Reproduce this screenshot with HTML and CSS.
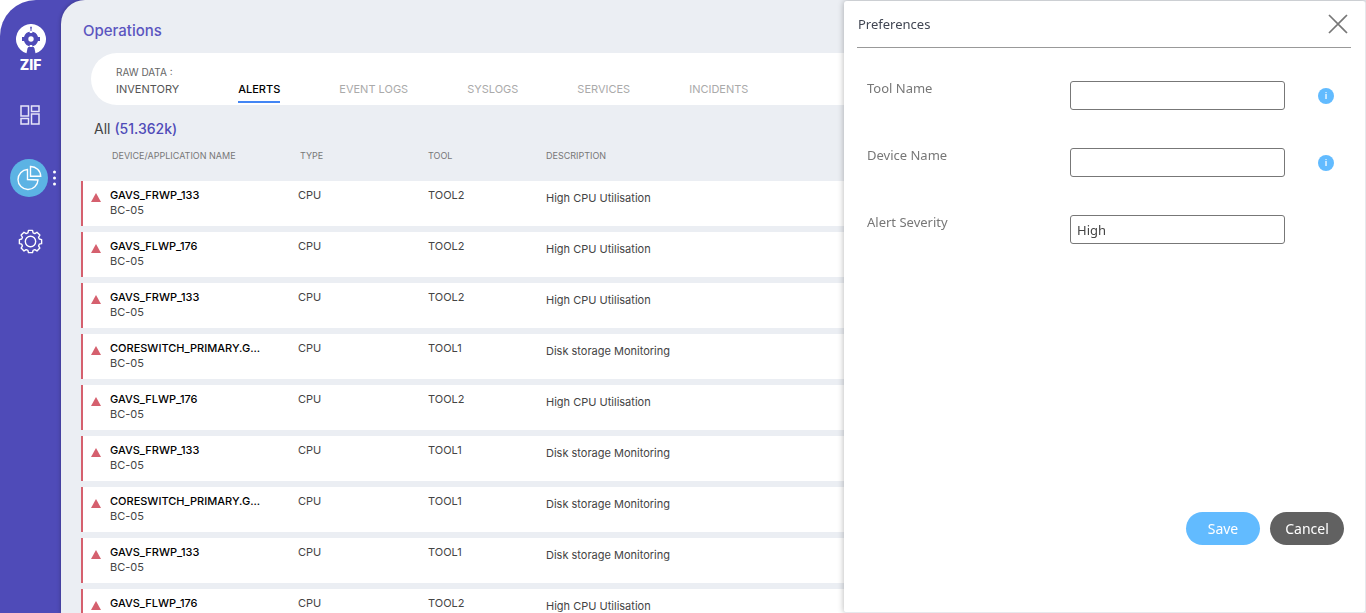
FILE: index.html
```html
<!DOCTYPE html>
<html lang="en">
<head>
<meta charset="utf-8">
<title>Operations</title>
<link rel="stylesheet" href="styles.css">
</head>
<body>
<div class="app">
  <nav class="sidebar" aria-label="Main">
    <a class="brand" href="#">
      <svg width="30" height="30" viewBox="0 0 30 30" aria-hidden="true">
        <path fill="#fff" d="M10.500 29.300A15 15 0 1 1 19.500 29.300L18.800 26A3.800 3.800 0 0 0 11.200 26Z"/>
        <path fill="#4f4bb8" d="M15 7.400a7.300 7.300 0 0 1 7 5.600h2v4h-2a7.300 7.300 0 0 1-14 0H6v-4h2a7.300 7.300 0 0 1 7-5.600z"/>
        <circle cx="15" cy="15" r="2.700" fill="#fff"/>
        <path fill="#4f4bb8" d="M14.200 2.800h1.600v1.800h-1.600zM14.500 4.600h1v3h-1z"/>
        <path fill="#fff" d="M13.700 7h2.600v2h-2.600zM13.700 21h2.600v2h-2.600z"/>
      </svg>
      <span class="brand-name">ZIF</span>
    </a>
    <a class="nav-link" href="#" aria-label="Dashboard">
      <svg width="20" height="20" viewBox="0 0 20 20" fill="none" stroke="#e6e5f7" stroke-width="1.500" aria-hidden="true">
        <path d="M1 1h7.500v10H1zM11.500 1H19v5.500h-7.500zM1 13.500h7.500V19H1zM11.500 9H19v10h-7.500z"/>
      </svg>
    </a>
    <a class="nav-link active" href="#" aria-label="Operations" aria-current="page">
      <svg width="26" height="26" viewBox="0 0 26 26" fill="none" stroke="#fff" stroke-width="1.400" aria-hidden="true">
        <path d="M11.500 4.500a10 10 0 1 0 10.500 10.500l-10.500-.5z"/>
        <path d="M14.500 1.500v9.800h10.200a10 10 0 0 0-10.200-9.800z"/>
      </svg>
      <svg class="dots" width="3" height="16" viewBox="0 0 3 16" fill="#fff" aria-hidden="true">
        <circle cx="1.500" cy="2" r="1.500"/><circle cx="1.500" cy="8" r="1.500"/><circle cx="1.500" cy="14" r="1.500"/>
      </svg>
    </a>
    <a class="nav-link" href="#" aria-label="Settings">
      <svg width="25" height="25" viewBox="0 0 26 27" fill="none" stroke="#fff" stroke-width="1.500" stroke-linejoin="round" aria-hidden="true">
        <path d="M10.800 1.500h4.400l.6 2.600 1.900.8 2.300-1.400 3.100 3.100-1.400 2.300.8 1.900 2.500.6v4.400l-2.500.6-.8 1.900 1.400 2.300-3.100 3.100-2.300-1.400-1.900.8-.6 2.400h-4.400l-.6-2.400-1.900-.8L6 23.700l-3.100-3.100 1.400-2.300-.8-1.900-2.500-.6v-4.400l2.500-.6.8-1.900-1.400-2.300L6 3.500l2.300 1.400 1.900-.8z"/>
        <circle cx="13" cy="13.500" r="5.600"/>
      </svg>
    </a>
  </nav>

  <main class="content">
    <h1 class="page-title">Operations</h1>
    <nav class="tabs" aria-label="Raw data">
      <div class="tab-group">
        <span class="tabs-caption">RAW DATA :</span>
        <a class="tab tab-dark" href="#">INVENTORY</a>
      </div>
      <a class="tab tab-active" href="#" aria-current="page">ALERTS</a>
      <a class="tab" href="#">EVENT LOGS</a>
      <a class="tab" href="#">SYSLOGS</a>
      <a class="tab" href="#">SERVICES</a>
      <a class="tab" href="#">INCIDENTS</a>
    </nav>
    <h2 class="summary">All <span class="count">(51.362k)</span></h2>
    <table class="alerts">
      <colgroup><col class="col-flag"><col class="col-name"><col class="col-type"><col class="col-tool"><col></colgroup>
      <thead>
        <tr><th></th><th scope="col" class="indent">DEVICE/APPLICATION NAME</th><th scope="col" class="indent">TYPE</th><th scope="col">TOOL</th><th scope="col">DESCRIPTION</th></tr>
      </thead>
      <tbody>
        <tr><td class="flag"><span class="triangle"></span></td><td><span class="device">GAVS_FRWP_133</span>BC-05</td><td>CPU</td><td>TOOL2</td><td class="desc">High CPU Utilisation</td></tr>
        <tr><td class="flag"><span class="triangle"></span></td><td><span class="device">GAVS_FLWP_176</span>BC-05</td><td>CPU</td><td>TOOL2</td><td class="desc">High CPU Utilisation</td></tr>
        <tr><td class="flag"><span class="triangle"></span></td><td><span class="device">GAVS_FRWP_133</span>BC-05</td><td>CPU</td><td>TOOL2</td><td class="desc">High CPU Utilisation</td></tr>
        <tr><td class="flag"><span class="triangle"></span></td><td><span class="device">CORESWITCH_PRIMARY.G...</span>BC-05</td><td>CPU</td><td>TOOL1</td><td class="desc">Disk storage Monitoring</td></tr>
        <tr><td class="flag"><span class="triangle"></span></td><td><span class="device">GAVS_FLWP_176</span>BC-05</td><td>CPU</td><td>TOOL2</td><td class="desc">High CPU Utilisation</td></tr>
        <tr><td class="flag"><span class="triangle"></span></td><td><span class="device">GAVS_FRWP_133</span>BC-05</td><td>CPU</td><td>TOOL1</td><td class="desc">Disk storage Monitoring</td></tr>
        <tr><td class="flag"><span class="triangle"></span></td><td><span class="device">CORESWITCH_PRIMARY.G...</span>BC-05</td><td>CPU</td><td>TOOL1</td><td class="desc">Disk storage Monitoring</td></tr>
        <tr><td class="flag"><span class="triangle"></span></td><td><span class="device">GAVS_FRWP_133</span>BC-05</td><td>CPU</td><td>TOOL1</td><td class="desc">Disk storage Monitoring</td></tr>
        <tr><td class="flag"><span class="triangle"></span></td><td><span class="device">GAVS_FLWP_176</span></td><td>CPU</td><td>TOOL2</td><td class="desc">High CPU Utilisation</td></tr>
      </tbody>
    </table>
  </main>

  <aside class="drawer" aria-labelledby="drawer-title">
    <header class="drawer-header">
      <h2 class="drawer-title" id="drawer-title">Preferences</h2>
      <button class="close" type="button" aria-label="Close">
        <svg width="20" height="20" viewBox="0 0 20 20" stroke="#777" stroke-width="1.700" aria-hidden="true"><path d="M1 1l18 18M19 1L1 19"/></svg>
      </button>
    </header>
    <form class="drawer-form">
      <div class="fields">
        <label for="tool-name">Tool Name</label>
        <input class="control" id="tool-name" type="text">
        <button class="info" type="button" aria-label="Tool name help">i</button>
        <label for="device-name">Device Name</label>
        <input class="control" id="device-name" type="text">
        <button class="info" type="button" aria-label="Device name help">i</button>
        <label for="severity">Alert Severity</label>
        <select class="control" id="severity"><option>High</option></select>
      </div>
      <div class="actions">
        <button class="btn btn-save" type="submit">Save</button>
        <button class="btn btn-cancel" type="button">Cancel</button>
      </div>
    </form>
  </aside>
</div>
</body>
</html>
```

FILE: styles.css
```css
* { box-sizing: border-box; }

body {
  margin: 0;
  background: #fff;
  color: #444;
  font-family: Inter, "Liberation Sans", sans-serif;
  font-size: 11px;
}

a { color: inherit; text-decoration: none; }
h1, h2 { margin: 0; font-weight: 400; }
button { border: 0; padding: 0; cursor: pointer; }
svg { display: block; }

.app {
  display: flex;
  height: 100vh;
  overflow: hidden;
  background: #4f4bb8;
  border-top-left-radius: 36px;
}

.sidebar {
  flex: none;
  display: flex;
  flex-direction: column;
  align-items: center;
  gap: 25px;
  width: 61px;
  padding: 24px 1px 0 0;
}

.brand {
  display: flex;
  flex-direction: column;
  align-items: center;
  gap: 4px;
  margin: 0 0 -1px 1px;
}

.brand-name {
  color: #fff;
  font-size: 14px;
  font-weight: 800;
  line-height: 14px;
}

.nav-link {
  display: flex;
  align-items: center;
  justify-content: center;
  position: relative;
  width: 38px;
  height: 38px;
  border-radius: 50%;
}

.active { background: #5cb3e4; margin-right: 2px; }
.dots { position: absolute; left: 43px; }

.content {
  flex: 1;
  min-width: 0;
  background: #ebeef3;
  border-top-left-radius: 24px;
  box-shadow: 0 0 4px rgba(0, 0, 0, 0.3);
  padding: 21px 0 0 20px;
}

.page-title {
  padding-left: 2px;
  color: #5b55c0;
  font-size: 15px;
  font-weight: 500;
  line-height: 20px;
}

.tabs {
  display: flex;
  align-items: flex-end;
  gap: 59px;
  height: 52px;
  margin: 12px 0 0 10px;
  padding-left: 25px;
  background: #fff;
  border-radius: 26px 0 0 26px;
}

.tab-group { display: flex; flex-direction: column; }
.tabs-caption { color: #666; font-size: 10px; line-height: 14px; }

.tab {
  height: 24px;
  margin-bottom: 2px;
  color: #aaa;
  line-height: 20px;
  white-space: nowrap;
}

.tab-dark { color: #555; }
.tab-active { color: #000; border-bottom: 2px solid #4285f4; font-weight: 500; }

.summary {
  margin-top: 14px;
  padding-left: 13px;
  font-size: 14px;
  line-height: 20px;
}

.count { color: #4f4bb8; font-weight: 500; }

.alerts {
  width: 100%;
  border-spacing: 0 6px;
  table-layout: fixed;
}

.col-flag { width: 29px; }
.col-name { width: 188px; }
.col-type { width: 130px; }
.col-tool { width: 118px; }

.alerts th {
  height: 30px;
  padding: 6px 0 0;
  color: #777;
  font-size: 9px;
  font-weight: 400;
  line-height: 10px;
  text-align: left;
  vertical-align: top;
}

.alerts .indent { padding-left: 2px; }

.alerts td {
  height: 45px;
  padding: 7px 0 0;
  background: #fff;
  line-height: 15px;
  vertical-align: top;
}

.alerts .flag { border-left: 2px solid #d5606e; padding: 12px 0 0 8px; }
.alerts .desc { padding-top: 10px; }
.device { display: block; color: #000; font-weight: 500; }

.triangle {
  display: block;
  width: 10px;
  height: 9px;
  background: #d5606e;
  clip-path: polygon(50% 0, 100% 100%, 0 100%);
}

.drawer {
  position: fixed;
  inset: 1px 0 0 auto;
  display: flex;
  flex-direction: column;
  width: 522px;
  max-width: 100%;
  padding: 0 14px 0 13px;
  background: #fff;
  border: solid #e6e8ec;
  border-width: 0 1px 1px 0;
  border-radius: 3px;
  box-shadow: 0 0 6px rgba(0, 0, 0, 0.3);
  font-family: "Noto Sans", sans-serif;
  font-size: 13px;
}

.drawer-header {
  display: flex;
  align-items: center;
  justify-content: space-between;
  height: 47px;
  border-bottom: 1px solid #999;
}

.drawer-title { font-size: 13px; color: #414653; padding-left: 1px; }
.close { background: none; margin-right: 3px; }

.drawer-form {
  flex: 1;
  display: flex;
  flex-direction: column;
  justify-content: space-between;
  padding: 33px 7px 67px 10px;
}

.fields {
  display: grid;
  grid-template-columns: 203px 1fr 36px;
  row-gap: 38px;
  align-items: center;
  color: #777;
}

.fields label { align-self: start; line-height: 15px; }

.control {
  width: calc(100% - 23px);
  height: 29px;
  padding: 0 6px;
  background: #fff;
  border: 1px solid #777;
  border-radius: 3px;
  appearance: none;
  color: #444;
  font: inherit;
}

.info {
  justify-self: center;
  width: 16px;
  height: 16px;
  border-radius: 50%;
  background: #62bbff;
  color: #fff;
  font: 600 9px/16px "Noto Sans", sans-serif;
}

.actions { display: flex; justify-content: flex-end; gap: 10px; }

.btn {
  width: 74px;
  height: 33px;
  border-radius: 17px;
  color: #fff;
  font: 14px "Noto Sans", sans-serif;
}

.btn-save { background: #62bbff; }
.btn-cancel { background: #616161; }
```
